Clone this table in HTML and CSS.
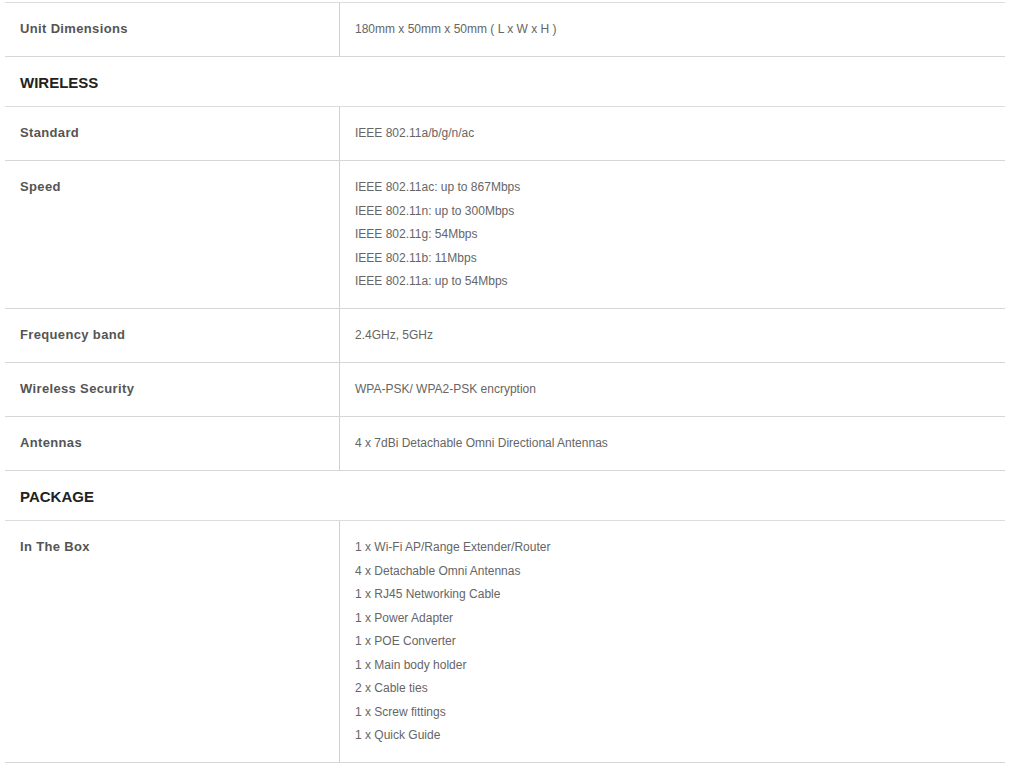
FILE: index.html
```html
<!DOCTYPE html>
<html>
<head>
<meta charset="utf-8">
<link rel="stylesheet" href="styles.css">
</head>
<body>
<div class="specs">
  <div class="row">
    <div class="label">Unit Dimensions</div>
    <div class="value">180mm x 50mm x 50mm ( L x W x H )</div>
  </div>
  <div class="section">WIRELESS</div>
  <div class="row">
    <div class="label">Standard</div>
    <div class="value">IEEE 802.11a/b/g/n/ac</div>
  </div>
  <div class="row">
    <div class="label">Speed</div>
    <div class="value">IEEE 802.11ac: up to 867Mbps<br>IEEE 802.11n: up to 300Mbps<br>IEEE 802.11g: 54Mbps<br>IEEE 802.11b: 11Mbps<br>IEEE 802.11a: up to 54Mbps</div>
  </div>
  <div class="row">
    <div class="label">Frequency band</div>
    <div class="value">2.4GHz, 5GHz</div>
  </div>
  <div class="row">
    <div class="label">Wireless Security</div>
    <div class="value">WPA-PSK/ WPA2-PSK encryption</div>
  </div>
  <div class="row">
    <div class="label">Antennas</div>
    <div class="value">4 x 7dBi Detachable Omni Directional Antennas</div>
  </div>
  <div class="section">PACKAGE</div>
  <div class="row">
    <div class="label">In The Box</div>
    <div class="value">1 x Wi-Fi AP/Range Extender/Router<br>4 x Detachable Omni Antennas<br>1 x RJ45 Networking Cable<br>1 x Power Adapter<br>1 x POE Converter<br>1 x Main body holder<br>2 x Cable ties<br>1 x Screw fittings<br>1 x Quick Guide</div>
  </div>
</div>
</body>
</html>
```

FILE: styles.css
```css
html, body {
  margin: 0;
  padding: 0;
  background: #ffffff;
}
body {
  padding: 2px 28px 0 5px;
  font-family: "Liberation Sans", Arial, sans-serif;
}
.specs {
  border-top: 1px solid #dcdcdc;
}
.row {
  display: flex;
  border-bottom: 1px solid #d6d6d6;
}
.label {
  width: 319px;
  flex: none;
  padding: 14px 0 15.5px 15px;
  border-right: 1px solid #d0d0d0;
  font-size: 13px;
  font-weight: bold;
  color: #555;
  line-height: 23.5px;
  letter-spacing: 0.35px;
}
.value {
  flex: 1;
  padding: 15px 15px 14.5px 15px;
  font-size: 12px;
  color: #666;
  line-height: 23.5px;
}
.section {
  height: 49px;
  line-height: 51px;
  padding-left: 15px;
  border-bottom: 1px solid #dcdcdc;
  font-size: 15px;
  font-weight: bold;
  color: #222;
}
```
